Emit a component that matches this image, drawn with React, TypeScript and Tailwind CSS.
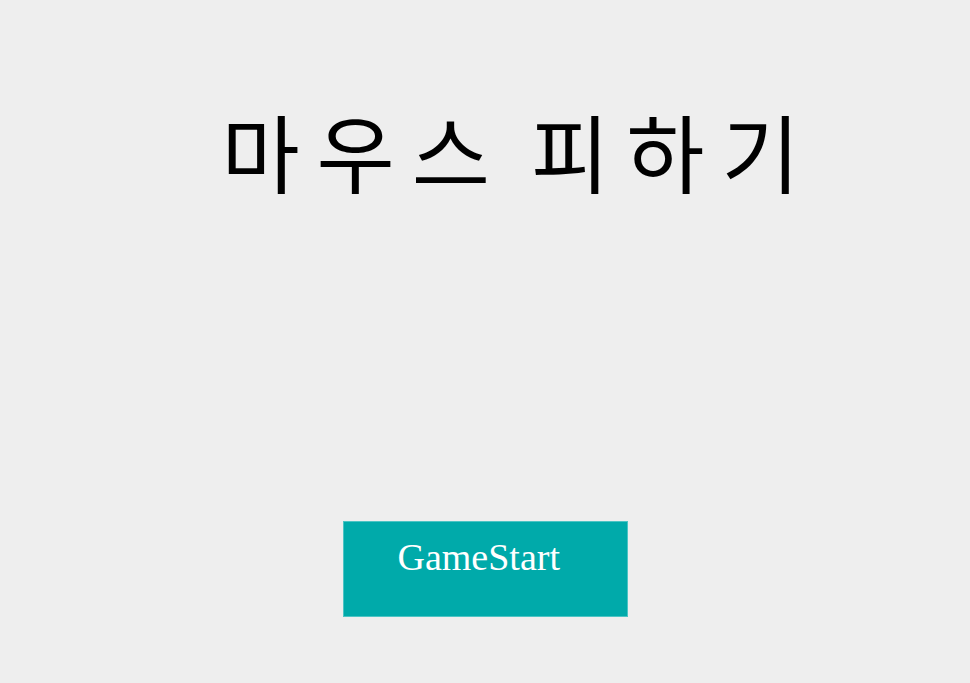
export default function App() {
  return (
    <div className="min-h-screen w-full bg-[#eeeeee] flex flex-col items-center">
      <h1 className="mt-[95px] pl-[68px] text-[85px] leading-[110px] font-normal text-black tracking-[17px] [word-spacing:-12px] whitespace-nowrap font-['Noto_Sans_CJK_KR','Noto_Sans',sans-serif]">
        마우스 피하기
      </h1>
      <button className="mt-[316px] w-[285px] h-[96px] bg-[#00aaaa] border border-[#4cc4c4] text-white text-[38px] leading-none flex items-start pt-[16px] pl-[54px] font-['Liberation_Serif',serif]">
        GameStart
      </button>
    </div>
  );
}
